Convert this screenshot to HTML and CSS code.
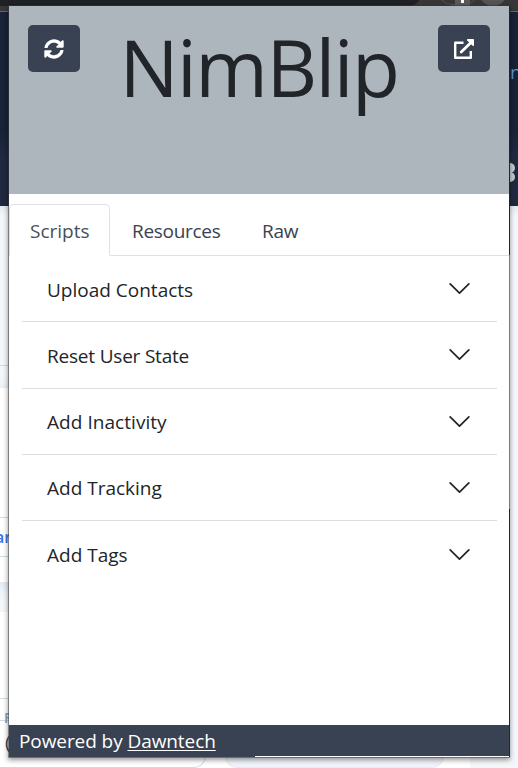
FILE: index.html
```html
<!DOCTYPE html>
<html lang="en">
<head>
<meta charset="utf-8">
<title>NimBlip</title>
<link rel="stylesheet" href="styles.css">
</head>
<body>
<div class="backdrop">
  <div class="browser-bar"><i class="bar-tab"></i><i class="bar-ring"></i><i class="bar-ext"><b></b></i><i class="bar-avatar"></i></div>
  <div class="site-nav"></div>
  <div class="site-band"></div>
  <div class="site-card first"></div>
  <div class="site-card second"></div>
  <i class="rule rule-a"></i><i class="rule rule-b"></i><i class="rule rule-c"></i><i class="rule rule-d"></i>
  <div class="site-field"></div>
  <div class="site-field tinted"></div>
  <span class="peek peek-nav">n</span>
  <i class="peek-gear one"></i><i class="peek-gear two"></i>
  <span class="peek peek-link">ar</span>
  <span class="peek peek-label">F</span>
  <span class="peek peek-value">(</span>
</div>
<main class="popup">
  <header class="hero">
    <button class="btn" aria-label="Refresh">
      <svg width="20" height="20" viewBox="0 0 512 512" fill="#fff"><path d="M371 142c-31-30-71-46-115-46-78 0-145 54-164 127-1 5-6 9-12 9H24c-8 0-14-7-12-14C33 102 134 8 256 8c66 0 127 26 171 69l36-36c15-15 41-4 41 17v142c0 13-11 24-24 24H338c-21 0-32-26-17-41l50-41zM32 288h142c21 0 32 26 17 41l-50 41c31 30 71 46 114 46 78 0 145-54 164-127 1-5 6-9 12-9h57c8 0 14 7 12 14-21 116-122 210-244 210-67 0-127-26-171-69l-36 36c-15 15-41 4-41-17V312c0-13 11-24 24-24z"/></svg>
    </button>
    <h1>NimBlip</h1>
    <button class="btn" aria-label="Open in new tab">
      <svg width="20" height="20" viewBox="0 0 20 20" fill="none" stroke="#fff"><path stroke-width="2.4" stroke-linejoin="round" d="M9.5 3.7H1.2V18.8H16.8V12"/><path stroke-width="2.8" stroke-linecap="round" d="M7.2 13L17 3.4"/><path fill="#fff" stroke="none" d="M13.6 0H19.2Q20 0 20 .8V6.4Q19.4 7.4 18.4 6.5L13.2 1.5Q12.5.4 13.6 0Z"/></svg>
    </button>
  </header>
  <nav class="tabs">
    <a class="tab active"><span>Scripts</span></a>
    <a class="tab resources"><span>Resources</span></a>
    <a class="tab raw"><span>Raw</span></a>
  </nav>
  <section class="list">
    <div class="row"><span>Upload Contacts</span><svg class="chev" viewBox="0 0 16 16"><path d="M2 5l6 6 6-6"/></svg></div>
    <div class="row reset"><span>Reset User State</span><svg class="chev" viewBox="0 0 16 16"><path d="M2 5l6 6 6-6"/></svg></div>
    <div class="row inactivity"><span>Add Inactivity</span><svg class="chev" viewBox="0 0 16 16"><path d="M2 5l6 6 6-6"/></svg></div>
    <div class="row"><span>Add Tracking</span><svg class="chev" viewBox="0 0 16 16"><path d="M2 5l6 6 6-6"/></svg></div>
    <div class="row"><span>Add Tags</span><svg class="chev" viewBox="0 0 16 16"><path d="M2 5l6 6 6-6"/></svg></div>
  </section>
  <footer class="foot"><span>Powered by <a>Dawntech</a></span></footer>
  <i class="edge upper"></i><i class="edge lower"></i><i class="edge base"></i>
</main>
</body>
</html>
```

FILE: styles.css
```css
* { box-sizing: border-box; }
body {
  margin: 0;
  width: 518px;
  height: 768px;
  overflow: hidden;
  position: relative;
  padding: 6px 9px 0;
  background: #f3f7f9;
  font-family: "Open Sans", "Noto Sans", sans-serif;
  font-size: 19px;
  color: #212529;
}

/* Page visible around the popup */
.backdrop { position: absolute; inset: 0; overflow: hidden; }
.backdrop > * { position: absolute; }
.browser-bar { left: 0; top: 0; width: 518px; height: 12px; background: #373737; border-bottom: 1px solid #676767; overflow: hidden; }
.browser-bar i { position: absolute; }
.bar-tab { left: -20px; top: -14px; width: 442px; height: 20px; border-radius: 0 0 14px 0; background: #202124; }
.bar-ring { left: 438px; top: -22px; width: 40px; height: 27px; border: 1px solid #555; border-radius: 14px; }
.bar-ext { left: 455px; top: -6px; width: 15px; height: 12px; background: #5a5a5a; }
.bar-ext b { position: absolute; left: 6px; top: 4px; width: 3px; height: 5px; background: #fff; }
.bar-avatar { left: 479px; top: -22px; width: 28px; height: 28px; border-radius: 50%; background: #555; }
.site-nav { left: 0; top: 12px; width: 518px; height: 194px; background: linear-gradient(#182337 0 60%, #202940 75%); }
.site-band { left: 0; top: 206px; width: 518px; height: 10px; background: linear-gradient(#e4eaed, #f3f7f9); }
.site-card { left: 0; width: 470px; background: #fff; }
.site-card.first { top: 388px; height: 194px; box-shadow: 0 3px 16px #c5d6e8; }
.site-card.second { top: 612px; height: 156px; }
.rule { left: 0; width: 12px; height: 1px; background: #ccdce3; }
.rule-a { top: 365px; }
.rule-b { top: 517px; }
.rule-c { top: 556px; }
.rule-d { top: 698px; }
.site-field { left: -10px; top: 720px; width: 216px; height: 48px; border: 1px solid #ccd9e4; border-radius: 0 0 12px 0; }
.site-field.tinted { left: 225px; width: 219px; border-color: #e5eaf4; border-radius: 0 0 12px 12px; background: #f1f5fb; }
.peek { line-height: 1; }
.peek-nav { left: 510px; top: 63px; font-size: 19px; color: #5b95c9; }
.peek-gear { left: 505px; width: 10px; height: 10px; border-radius: 50%; background: #bdcdcf; }
.peek-gear.one { top: 163px; }
.peek-gear.two { top: 172px; }
.peek-link { left: -5px; top: 529px; font-size: 16px; font-weight: 600; color: #3c73e8; }
.peek-label { left: 4px; top: 711px; font-size: 14px; font-weight: 600; color: #8da1b6; }
.peek-value { left: 5px; top: 733px; font-size: 19px; color: #345; }

.popup {
  position: relative;
  display: flex;
  flex-direction: column;
  width: 500px;
  height: 751px;
  background: #fff;
  box-shadow: 0 0 0 1px rgba(60, 60, 60, .5), 0 2px 5px 1px rgba(0, 0, 0, .42);
}
.hero {
  display: flex;
  justify-content: space-between;
  height: 188px;
  padding: 19px 19px 0;
  background: #adb5bd;
}
.btn {
  display: grid;
  place-items: center;
  width: 52px;
  height: 47px;
  padding: 0;
  border: 0;
  border-radius: 5px;
  background: #394252;
}
h1 { margin: -6px 0 0; font-size: 78.5px; font-weight: 400; line-height: 96px; letter-spacing: -1.6px; }
.tabs {
  display: flex;
  height: 62px;
  padding-top: 10px;
  border-bottom: 1px solid #dee2e6;
}
.tab {
  display: flex;
  align-items: center;
  height: 51px;
  padding: 2px 21px 0;
  border: 1px solid transparent;
  color: #394252;
}
.tab.active {
  width: 101px;
  height: 52px;
  padding-left: 20px;
  border-color: #dee2e6;
  border-bottom-color: #fff;
  border-radius: 5px 5px 0 0;
  background: #fff;
  color: #495057;
}
.tab.resources { width: 131px; letter-spacing: -.3px; }
.tab.raw { padding-left: 20px; letter-spacing: -.3px; }
.list { flex: 1; padding: 0 12px 0 13px; }
.row {
  display: flex;
  align-items: center;
  justify-content: space-between;
  height: 66.25px;
  padding: 2px 25px 0;
  border-bottom: 1px solid #dcdee0;
}
.row:last-child { border-bottom: 0; }
.row.reset { letter-spacing: -.2px; }
.row.inactivity { letter-spacing: .05px; }
.row span, .tab span, .foot span { white-space: nowrap; }
.chev { width: 25px; height: 25px; margin-bottom: 2px; fill: none; stroke: #212529; stroke-width: 1.1; stroke-linecap: round; stroke-linejoin: round; }
.foot { height: 32px; padding: 0 10px; line-height: 32px; background: #394252; color: #fff; letter-spacing: -.08px; }
.foot a { text-decoration: underline; text-decoration-thickness: 1px; text-underline-offset: 2px; }
.edge { position: absolute; background: #24262b; }
.edge.upper { right: -1px; top: 0; width: 1px; height: 249px; }
.edge.lower { right: -1px; top: 503px; width: 1px; height: 248px; }
.edge.base { left: 246px; right: 0; bottom: 0; height: 1px; background: #fff; }
```
